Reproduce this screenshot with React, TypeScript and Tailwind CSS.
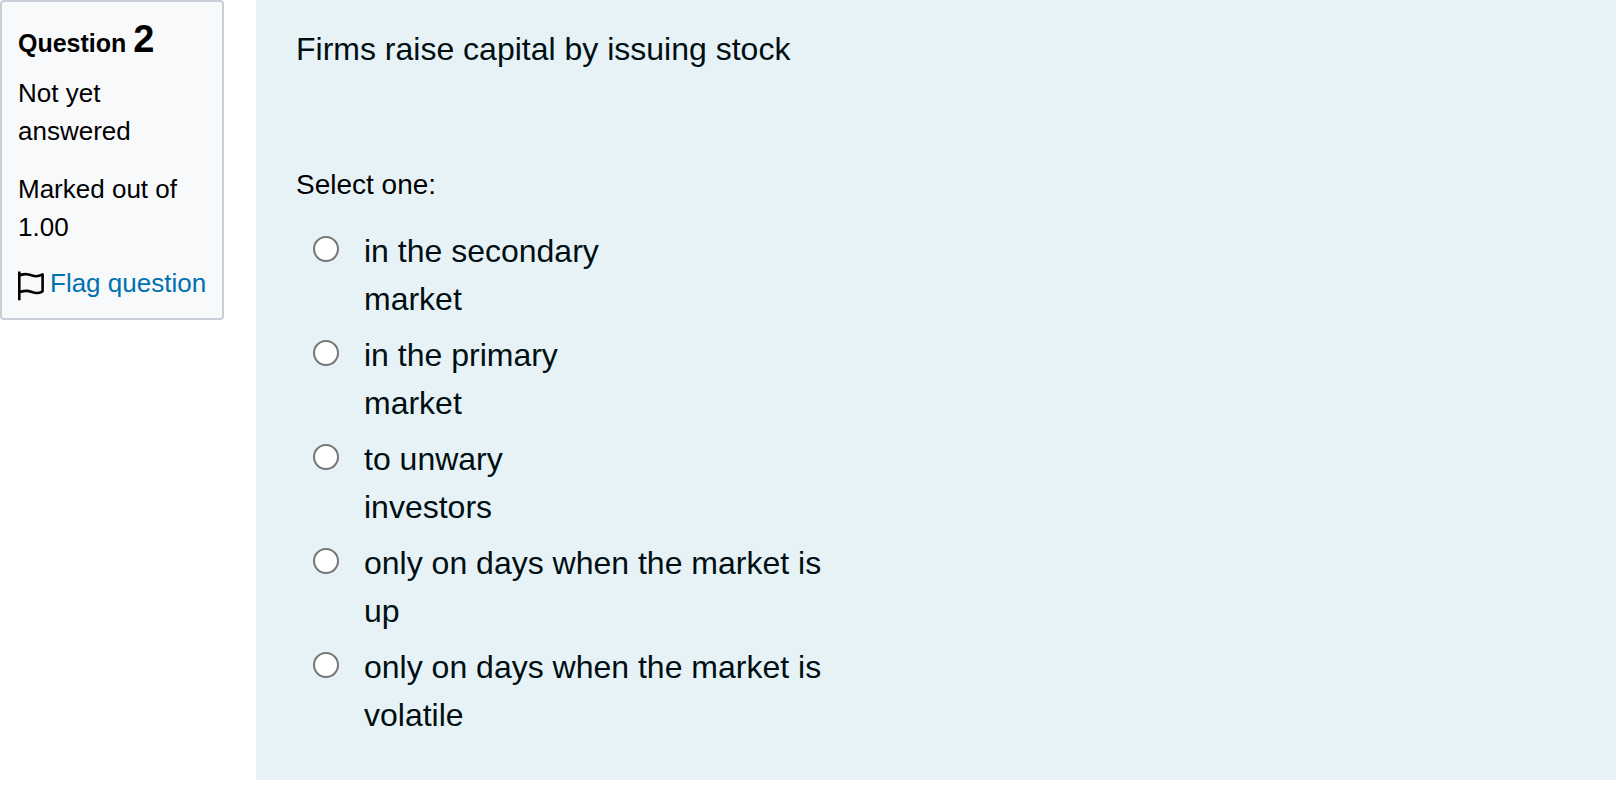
const options: { id: string; lines: [string, string] }[] = [
  { id: "a", lines: ["in the secondary", "market"] },
  { id: "b", lines: ["in the primary", "market"] },
  { id: "c", lines: ["to unwary", "investors"] },
  { id: "d", lines: ["only on days when the market is", "up"] },
  { id: "e", lines: ["only on days when the market is", "volatile"] },
];

function FlagIcon() {
  return (
    <svg
      aria-hidden="true"
      className="mt-[7px] h-[30px] w-[26px] shrink-0"
      viewBox="0 0 26 30"
      fill="none"
      stroke="#000"
      strokeWidth="2.6"
      strokeLinejoin="round"
    >
      <path d="M1.3 0.5V29.3" />
      <path d="M1.3 4.3C4 3.6 6 3 8.5 3.2C12.500 3.500 15 5.300 18.500 5.200C21 5.100 22.800 4.200 24.600 3.400V20.300C22.800 21.300 21 22.100 18.500 22C15 21.900 12.500 19.900 8.500 19.900C6 19.900 4 20.400 1.300 21.100" />
    </svg>
  );
}

function QuestionInfo() {
  return (
    <aside className="w-56 shrink-0 rounded border-2 border-[#c8ced7] bg-[#f8f9fb] p-4 text-[26px] leading-[38px] text-black">
      <h3 className="mb-2.5 text-[25px] leading-[42px] font-bold">
        Question <span className="text-[38px]">2</span>
      </h3>
      <p className="mb-5">Not yet answered</p>
      <p className="mb-[18px]">Marked out of 1.00</p>
      <a href="#flag" className="flex gap-1.5 whitespace-nowrap text-[#0070b0]">
        <FlagIcon />
        Flag question
      </a>
    </aside>
  );
}

export default function App() {
  return (
    <main className="flex items-start gap-8 bg-white font-['Liberation_Sans',Arial,sans-serif]">
      <QuestionInfo />
      <section className="min-w-0 flex-1 bg-[#e7f2f7] px-10 pt-[25px] pb-[41px] text-[32px] leading-[48px] text-[#000f12]">
        <p className="mb-[91px]">Firms raise capital by issuing stock</p>
        <fieldset>
          <legend className="mb-[21px] text-[28px] leading-[42px] text-black">Select one:</legend>
          <div className="flex flex-col gap-2 pl-[17px]">
            {options.map((option) => (
              <div key={option.id} className="flex items-start gap-[25px]">
                <input
                  type="radio"
                  name="answer"
                  id={`answer-${option.id}`}
                  className="mt-[9px] size-[26px] shrink-0 appearance-none rounded-full border-2 border-[#767676] bg-white checked:bg-[#0070b0]"
                />
                <label htmlFor={`answer-${option.id}`}>
                  {option.lines[0]}
                  <br />
                  {option.lines[1]}
                </label>
              </div>
            ))}
          </div>
        </fieldset>
      </section>
    </main>
  );
}
